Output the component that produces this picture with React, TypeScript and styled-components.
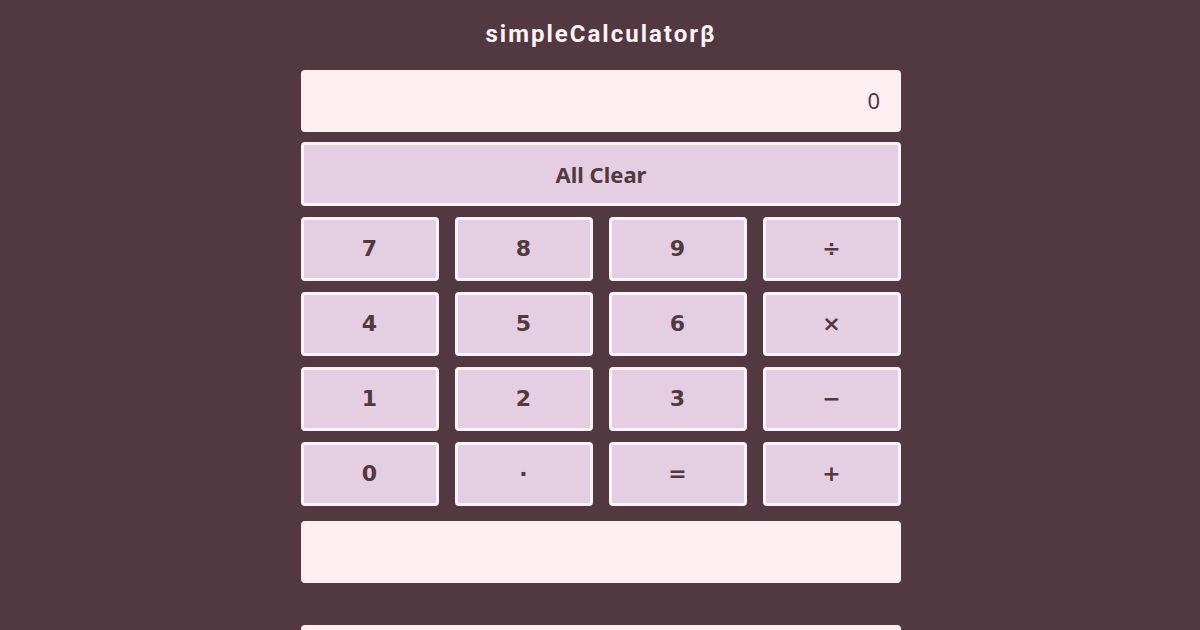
import React, { useState } from "react";
import styled, { createGlobalStyle } from "styled-components";

const ink = "#513841";
const cream = "#fdeef1";
const rim = "#fff1f7";
const lilac = "#e6cee2";

const GlobalStyle = createGlobalStyle`
  *, *::before, *::after { box-sizing: border-box; }
  body {
    margin: 0;
    background: ${ink};
    color: ${ink};
    font-family: "Noto Sans", sans-serif;
  }
`;

const Page = styled.main`
  display: flex;
  flex-direction: column;
  align-items: center;
  padding: 14px 15px 40px 17px;
`;

const Title = styled.h1`
  margin: 0 0 16px;
  color: ${rim};
  font-family: "Roboto", sans-serif;
  font-size: 24px;
  line-height: 40px;
  font-weight: 700;
  letter-spacing: 2px;
`;

const Calculator = styled.form`
  width: 100%;
  max-width: 600px;
`;

const Field = styled.input`
  display: block;
  width: 100%;
  height: 62px;
  padding: 0 21px 2px;
  border: 0;
  border-radius: 4px;
  background: ${cream};
  color: ${ink};
  font-family: inherit;
  font-size: 22px;
  text-align: right;
`;

const Keys = styled.div`
  display: grid;
  grid-template-columns: repeat(4, 1fr);
  gap: 11px 16px;
  margin: 10px 0 15px;
`;

const Key = styled.button<{ $wide?: boolean }>`
  grid-column: ${(p) => (p.$wide ? "1 / -1" : "auto")};
  height: 64px;
  padding: ${(p) => (p.$wide ? "0" : "0 1px 2px 0")};
  border: 3px solid ${rim};
  border-radius: 4px;
  background: ${lilac};
  color: ${ink};
  font-family: ${(p) => (p.$wide ? '"Noto Sans", sans-serif' : '"DejaVu Sans", sans-serif')};
  font-size: 22px;
  font-weight: 700;
  cursor: pointer;
`;

const Notes = styled.div`
  display: grid;
  gap: 42px;
`;

const keys = ["7", "8", "9", "÷", "4", "5", "6", "×", "1", "2", "3", "−", "0", "·", "=", "+"];

function compute(a: number, op: string, b: number) {
  if (op === "÷") return a / b;
  if (op === "×") return a * b;
  if (op === "−") return a - b;
  return a + b;
}

export default function App() {
  const [value, setValue] = useState("0");
  const [stored, setStored] = useState<{ n: number; op: string } | null>(null);
  const [fresh, setFresh] = useState(true);
  const [history, setHistory] = useState("");

  const clear = () => {
    setValue("0");
    setStored(null);
    setFresh(true);
    setHistory("");
  };

  const press = (key: string) => {
    if (/\d/.test(key)) {
      setValue(fresh ? key : value + key);
      setFresh(false);
    } else if (key === "·") {
      if (fresh) setValue("0.");
      else if (!value.includes(".")) setValue(value + ".");
      setFresh(false);
    } else {
      const n = stored ? compute(stored.n, stored.op, Number(value)) : Number(value);
      if (stored) setHistory(`${stored.n} ${stored.op} ${value} = ${n}`);
      setValue(String(n));
      setStored(key === "=" ? null : { n, op: key });
      setFresh(true);
    }
  };

  return (
    <>
      <GlobalStyle />
      <Page>
        <Title>simpleCalculatorβ</Title>
        <Calculator onSubmit={(e) => e.preventDefault()}>
          <Field aria-label="Result" readOnly value={value} />
          <Keys>
            <Key type="button" $wide onClick={clear}>
              All Clear
            </Key>
            {keys.map((key) => (
              <Key type="button" key={key} onClick={() => press(key)}>
                {key}
              </Key>
            ))}
          </Keys>
          <Notes>
            <Field aria-label="History" readOnly value={history} />
            <Field aria-label="Memo" />
          </Notes>
        </Calculator>
      </Page>
    </>
  );
}
